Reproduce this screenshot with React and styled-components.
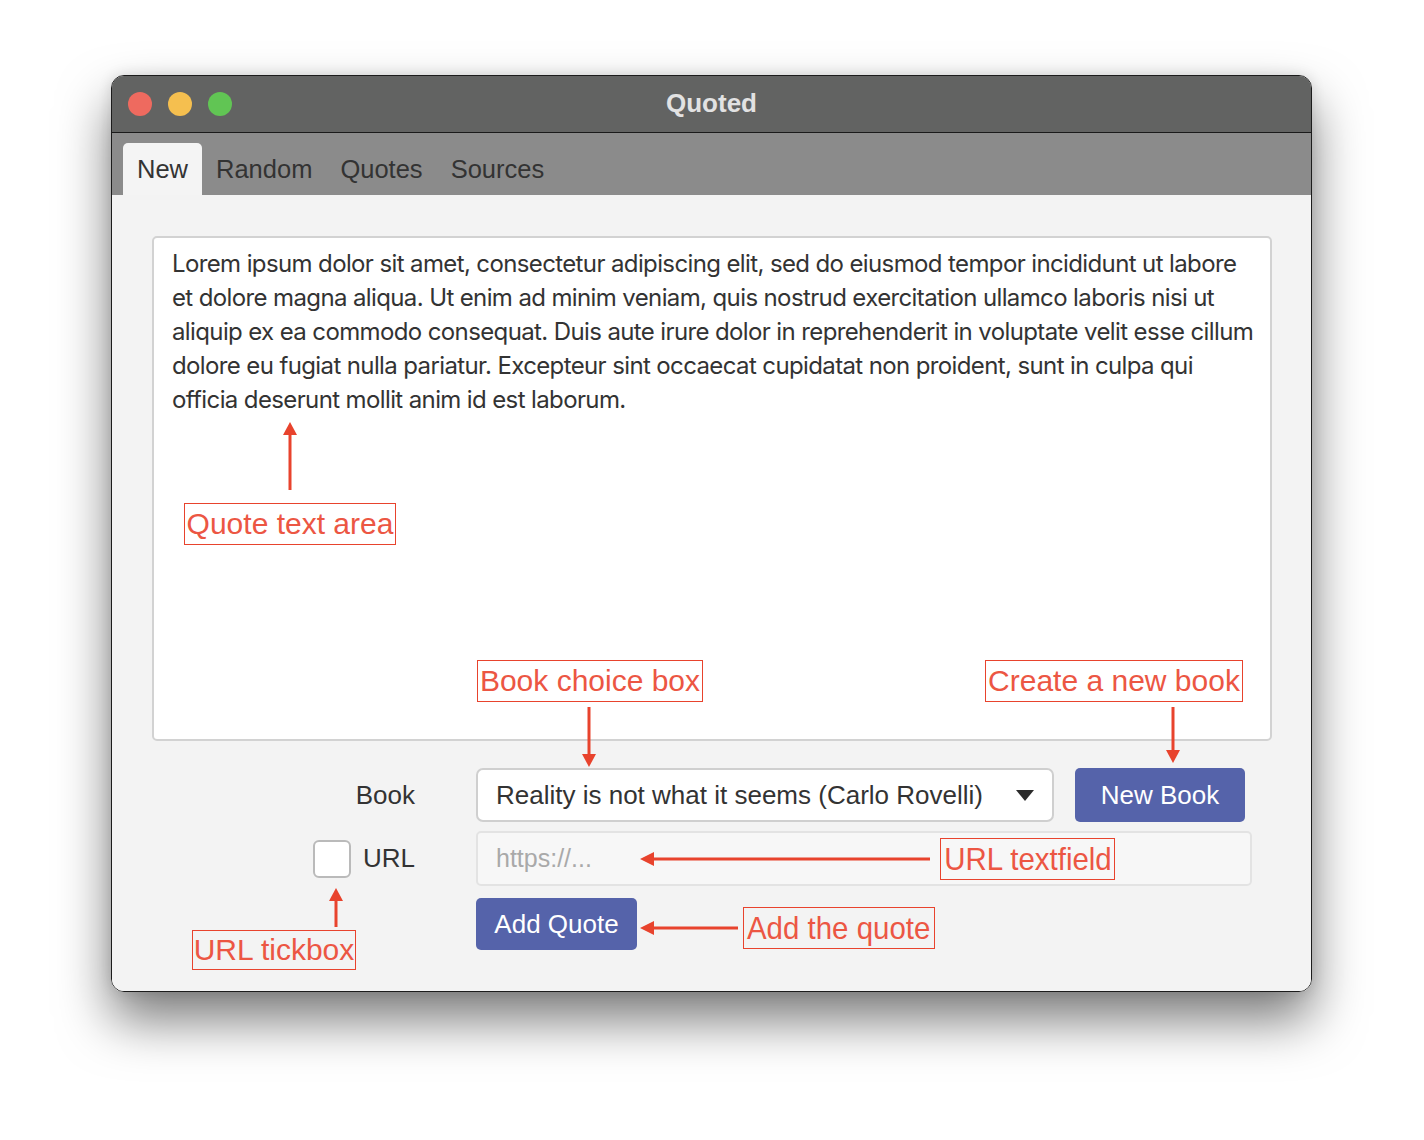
import React from 'react';
import styled, { createGlobalStyle } from 'styled-components';

const GlobalStyle = createGlobalStyle`
  html, body {
    margin: 0;
    background: #fff;
    font-family: "Liberation Sans", Arial, sans-serif;
  }
`;

const Page = styled.div`
  width: 1424px;
  height: 1140px;
  padding: 75px 0 0 111px;
  box-sizing: border-box;
`;

const Window = styled.div`
  width: 1201px;
  height: 917px;
  box-sizing: border-box;
  border: 1px solid #1c1c1c;
  border-radius: 13px;
  overflow: hidden;
  display: flex;
  flex-direction: column;
  box-shadow: 0 28px 52px rgba(0, 0, 0, 0.52), 0 0 14px rgba(0, 0, 0, 0.12);
`;

const TitleBar = styled.div`
  height: 56px;
  flex: none;
  background: #626362;
  border-bottom: 1px solid #1a1a1a;
  display: grid;
  grid-template-columns: 1fr auto 1fr;
  align-items: center;
  padding: 0 16px;
`;

const Lights = styled.div`
  display: flex;
  gap: 16px;
`;

const Light = styled.span`
  width: 24px;
  height: 24px;
  border-radius: 50%;
  background: ${(p) => p.$color};
`;

const Title = styled.div`
  font-size: 26px;
  font-weight: 700;
  color: #e2e2e2;
  margin-top: -2px;
`;

const TabBar = styled.div`
  height: 62px;
  flex: none;
  background: #8b8b8b;
  display: flex;
  align-items: flex-end;
  padding-left: 11px;
`;

const Tab = styled.div`
  height: 52px;
  padding: 0 14px;
  display: flex;
  align-items: center;
  font-size: 25.5px;
  color: #333;
  border-radius: 5px 5px 0 0;
  background: ${(p) => (p.$active ? '#f4f4f4' : 'transparent')};
`;

const Content = styled.div`
  flex: 1;
  position: relative;
  background: #f3f3f3;
  padding: 41px 39px 0 40px;
`;

const TextArea = styled.div`
  height: 505px;
  box-sizing: border-box;
  background: #fff;
  border: 2px solid #d2d2d2;
  border-radius: 5px;
  padding: 9px 18px;
  font-family: Inter, "Liberation Sans", sans-serif;
  font-size: 24px;
  letter-spacing: -0.62px;
  line-height: 34px;
  color: #333;
  white-space: pre;
  overflow: hidden;
`;

const Row = styled.div`
  display: grid;
  grid-template-columns: 263px auto;
  column-gap: 61px;
  align-items: center;
  margin-top: ${(p) => p.$top}px;
`;

const Label = styled.div`
  justify-self: end;
  display: flex;
  align-items: center;
  gap: 12px;
  font-size: 26px;
  color: #333;
`;

const Controls = styled.div`
  display: flex;
  align-items: center;
  gap: 21px;
`;

const Select = styled.div`
  width: 578px;
  height: 54px;
  box-sizing: border-box;
  background: #fff;
  border: 2px solid #cfcfcf;
  border-radius: 7px;
  padding: 0 18px 0 18px;
  display: flex;
  align-items: center;
  justify-content: space-between;
  font-size: 26px;
  color: #333;
`;

const Caret = styled.span`
  width: 0;
  height: 0;
  border-left: 9px solid transparent;
  border-right: 9px solid transparent;
  border-top: 11px solid #2b2b2b;
`;

const Button = styled.div`
  width: ${(p) => p.$w}px;
  height: ${(p) => p.$h}px;
  background: #5563aa;
  border-radius: 5px;
  color: #fff;
  font-size: 26px;
  display: flex;
  align-items: center;
  justify-content: center;
`;

const UrlField = styled.div`
  width: 776px;
  height: 55px;
  box-sizing: border-box;
  background: #f7f7f7;
  border: 2px solid #e3e3e3;
  border-radius: 5px;
  padding-left: 18px;
  display: flex;
  align-items: center;
  font-size: 25px;
  color: #a9a9a9;
`;

const Checkbox = styled.span`
  width: 38px;
  height: 38px;
  box-sizing: border-box;
  background: #fff;
  border: 2px solid #bababa;
  border-radius: 6px;
`;

const Note = styled.div`
  position: absolute;
  left: ${(p) => p.$x}px;
  top: ${(p) => p.$y}px;
  width: ${(p) => p.$w}px;
  height: ${(p) => p.$h}px;
  box-sizing: border-box;
  border: 1.5px solid #e8432d;
  color: #ec5643;
  font-size: ${(p) => p.$size || 30}px;
  display: flex;
  align-items: center;
  justify-content: center;
  white-space: nowrap;
  overflow: visible;

  span {
    display: inline-block;
    transform: scaleX(${(p) => p.$squeeze || 1});
  }
`;

const ArrowBox = styled.svg`
  position: absolute;
  left: ${(p) => p.$x}px;
  top: ${(p) => p.$y}px;
  overflow: visible;
`;

const RED = '#e8432d';

const Arrow = ({ x, y, len, dir }) => {
  const vertical = dir === 'up' || dir === 'down';
  const w = vertical ? 16 : len;
  const h = vertical ? len : 16;
  let line;
  let head;
  if (dir === 'up') {
    line = <line x1="8" y1="12" x2="8" y2={len} stroke={RED} strokeWidth="3" />;
    head = <polygon points="8,0 15,13 1,13" fill={RED} />;
  } else if (dir === 'down') {
    line = <line x1="8" y1="0" x2="8" y2={len - 12} stroke={RED} strokeWidth="3" />;
    head = <polygon points={`8,${len} 15,${len - 13} 1,${len - 13}`} fill={RED} />;
  } else {
    line = <line x1="12" y1="8" x2={len} y2="8" stroke={RED} strokeWidth="3" />;
    head = <polygon points="0,8 14,1 14,15" fill={RED} />;
  }
  return (
    <ArrowBox $x={vertical ? x - 8 : x} $y={vertical ? y : y - 8} width={w} height={h}>
      {line}
      {head}
    </ArrowBox>
  );
};

const quote = `Lorem ipsum dolor sit amet, consectetur adipiscing elit, sed do eiusmod tempor incididunt ut labore
et dolore magna aliqua. Ut enim ad minim veniam, quis nostrud exercitation ullamco laboris nisi ut
aliquip ex ea commodo consequat. Duis aute irure dolor in reprehenderit in voluptate velit esse cillum
dolore eu fugiat nulla pariatur. Excepteur sint occaecat cupidatat non proident, sunt in culpa qui
officia deserunt mollit anim id est laborum.`;

export default function App() {
  return (
    <Page>
      <GlobalStyle />
      <Window>
        <TitleBar>
          <Lights>
            <Light $color="#ee6a5f" />
            <Light $color="#f5bf4f" />
            <Light $color="#61c554" />
          </Lights>
          <Title>Quoted</Title>
          <span />
        </TitleBar>
        <TabBar>
          <Tab $active>New</Tab>
          <Tab>Random</Tab>
          <Tab>Quotes</Tab>
          <Tab>Sources</Tab>
        </TabBar>
        <Content>
          <TextArea>{quote}</TextArea>

          <Row $top={27}>
            <Label>Book</Label>
            <Controls>
              <Select>
                Reality is not what it seems (Carlo Rovelli)
                <Caret />
              </Select>
              <Button $w={170} $h={54}>New Book</Button>
            </Controls>
          </Row>
          <Row $top={9}>
            <Label>
              <Checkbox />
              URL
            </Label>
            <UrlField>https://...</UrlField>
          </Row>
          <Row $top={12}>
            <span />
            <Button $w={161} $h={52}>Add Quote</Button>
          </Row>

          <Arrow x={178} y={227} len={68} dir="up" />
          <Note $x={72} $y={308} $w={212} $h={42}><span>Quote text area</span></Note>

          <Note $x={365} $y={465} $w={226} $h={42}><span>Book choice box</span></Note>
          <Arrow x={477} y={512} len={60} dir="down" />

          <Note $x={873} $y={465} $w={258} $h={42}><span>Create a new book</span></Note>
          <Arrow x={1061} y={512} len={56} dir="down" />

          <Arrow x={528} y={664} len={290} dir="left" />
          <Note $x={828} $y={643} $w={175} $h={42} $size={32} $squeeze={0.92}><span>URL textfield</span></Note>

          <Arrow x={528} y={733} len={98} dir="left" />
          <Note $x={631} $y={712} $w={192} $h={42} $size={32} $squeeze={0.92}><span>Add the quote</span></Note>

          <Arrow x={224} y={693} len={39} dir="up" />
          <Note $x={80} $y={735} $w={164} $h={40}><span>URL tickbox</span></Note>
        </Content>
      </Window>
    </Page>
  );
}
